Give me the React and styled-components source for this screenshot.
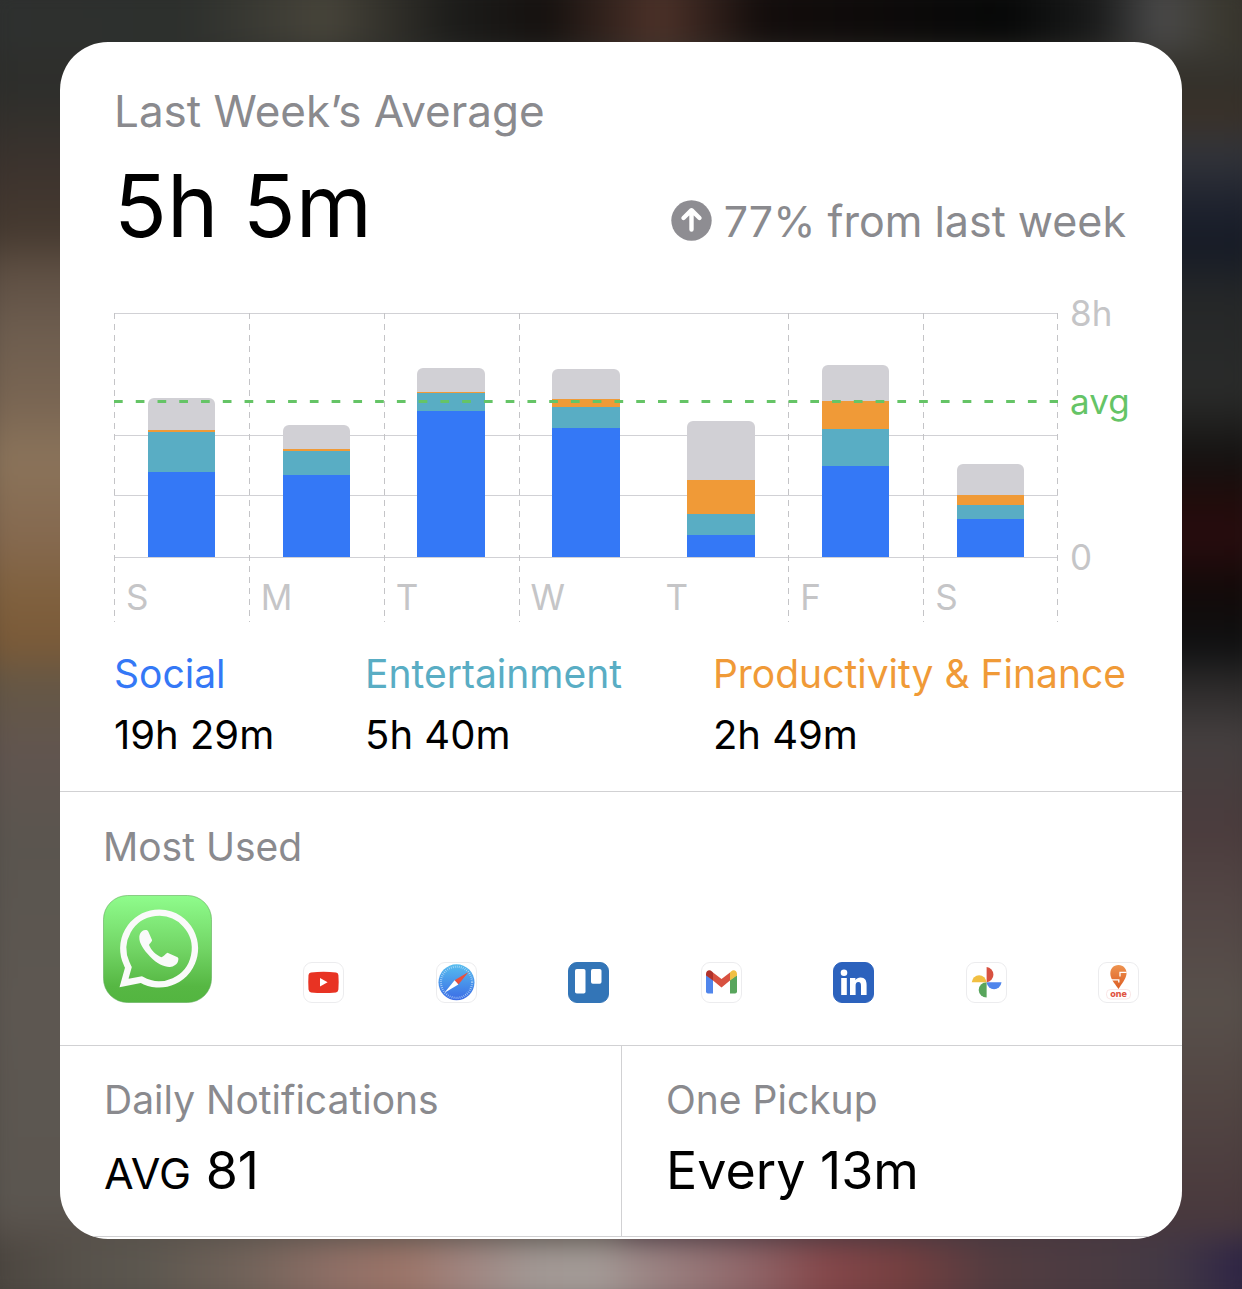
import React from "react";
import styled, { createGlobalStyle } from "styled-components";

const GlobalStyle = createGlobalStyle`
  *, *::before, *::after { box-sizing: border-box; }
  body {
    margin: 0;
    background: #2b2b2b;
    font-family: Inter, "Liberation Sans", sans-serif;
    color: #000;
  }
  h1, h2, p, dl, dt, dd, ul { margin: 0; padding: 0; font-weight: 400; }
`;

const Page = styled.main`
  position: relative;
  overflow: hidden;
  min-height: 100vh;
  padding: 42px 60px 50px;
`;

const Backdrop = styled.div`
  position: absolute;
  inset: -20px;
  filter: blur(14px);
  background:
    linear-gradient(to right, #2e302f 0%, #2d302d 16%, #47443a 27%, #1c1c1a 37%, #15110f 44%, #4d3229 53%, #130d0c 61%, #070808 80%, #1a1b1b 87%, #4a4a4a 92%, #3a382f 97%, #35322b 100%) top / 100% 70px no-repeat,
    linear-gradient(to right, #4a443e 0%, #57524b 8%, #5c574f 13%, #72635a 21%, #8f6f66 28%, #9b7468 33%, #a08580 38%, #a19793 43%, #a39a96 48%, #9b8584 52%, #8f6568 60%, #84474a 66%, #743f40 72%, #533c40 79%, #493b42 88%, #423845 93%, #2a2045 100%) bottom / 100% 68px no-repeat,
    linear-gradient(to bottom, #2f302f 0%, #2d2e2b 8%, #3e342e 15%, #463a30 19%, #5e4f43 22%, #6c5c4e 26%, #7a6653 32%, #8a735a 36%, #85694f 42%, #80613f 46%, #7a5a38 50%, #655745 53%, #61554f 58%, #5a554f 65%, #5d5751 77%, #5b5650 92%, #4c403a 100%) left / 50% 100% no-repeat,
    linear-gradient(to bottom, #43443f 0%, #33302a 8%, #3a3128 10%, #32343a 13%, #1e222e 17%, #161b26 20%, #252728 24%, #2a2b2a 31%, #141211 36%, #200c0b 39%, #280c0e 42%, #120a09 46%, #0f1011 50%, #2b2929 53%, #443f3f 57%, #4b3c3d 64%, #524544 69%, #58504b 77%, #524643 84%, #4a3a3d 92%, #3c3044 100%) right / 50% 100% no-repeat;
`;

const Card = styled.article`
  position: relative;
  overflow: hidden;
  border-radius: 48px;
  background: #fff;
`;

const Section = styled.section`
  padding: ${(p) => p.$pad};
  border-bottom: 1px solid #d1d1d3;
`;

const Title = styled.h1`
  color: #8a8a8e;
  font-size: 44px;
  line-height: 54px;
`;

const Subtitle = styled.h2`
  color: #8a8a8e;
  font-size: 39px;
  line-height: 48px;
`;

const Headline = styled.div`
  display: flex;
  align-items: baseline;
  justify-content: space-between;
  margin-top: 15px;
`;

const Total = styled.p`
  font-size: 87px;
  line-height: 106px;
`;

const Change = styled.p`
  color: #8a8a8e;
  font-size: 43px;
  line-height: 54px;
  svg {
    margin-right: 12px;
    vertical-align: -4px;
  }
`;

const Chart = styled.div`
  display: grid;
  grid-template-columns: 1fr 68px;
  margin-top: 54px;
`;

const Columns = styled.div`
  position: relative;
  display: grid;
  grid-template-columns: repeat(7, 1fr);
  background:
    repeating-linear-gradient(to bottom, #c4c4c7 0 6px, transparent 6px 11px) right / 1px 100% no-repeat,
    linear-gradient(#d1d1d5, #d1d1d5) 0 0 / 100% 1px no-repeat,
    linear-gradient(#d1d1d5, #d1d1d5) 0 122px / 100% 1px no-repeat,
    linear-gradient(#d1d1d5, #d1d1d5) 0 182px / 100% 1px no-repeat,
    linear-gradient(#d1d1d5, #d1d1d5) 0 244px / 100% 1px no-repeat;
`;

const Day = styled.div`
  background: ${(p) =>
    p.$ruled
      ? "repeating-linear-gradient(to bottom, #c4c4c7 0 6px, transparent 6px 11px) left / 1px 100% no-repeat"
      : "none"};
`;

const Stack = styled.div`
  display: flex;
  flex-direction: column;
  justify-content: flex-end;
  width: 50%;
  height: 244px;
  margin: 0 auto;
`;

const Segment = styled.div`
  flex: none;
  background: ${(p) => p.$color};
  &:first-child { border-radius: 6px 6px 0 0; }
`;

const DayName = styled.p`
  padding: 18px 0 3px 12px;
  color: #c5c5c7;
  font-size: 35px;
  line-height: 44px;
`;

const AverageLine = styled.svg`
  position: absolute;
  top: 87px;
  left: 0;
  width: 100%;
  height: 3px;
`;

const Axis = styled.div`
  display: flex;
  flex-direction: column;
  height: 244px;
  padding-left: 12px;
  color: #c5c5c7;
  font-size: 35px;
  line-height: 44px;
`;

const AxisLabel = styled.span`
  margin-top: ${(p) => p.$gap}px;
  color: ${(p) => p.$color || "inherit"};
`;

const Categories = styled.dl`
  display: flex;
  justify-content: space-between;
  margin-top: 28px;
  font-size: 40px;
  line-height: 48px;
`;

const Category = styled.div`
  dt {
    margin-bottom: 13px;
    color: ${(p) => p.$color};
    font-size: 39px;
  }
`;

const Apps = styled.ul`
  display: flex;
  align-items: flex-end;
  justify-content: space-between;
  margin-top: 24px;
  list-style: none;
`;

const AppItem = styled.li`
  display: flex;
`;

const Stats = styled.div`
  display: grid;
  grid-template-columns: 1fr 1fr;
  margin-bottom: 2px;
  border-bottom: 1px solid #d1d1d3;
`;

const Stat = styled.section`
  padding: 30px 44px 31px;
  & + & { border-left: 1px solid #d1d1d3; }
`;

const StatValue = styled.p`
  margin-top: 15px;
  font-size: 52px;
  line-height: 64px;
  small { font-size: 43px; }
`;

const COLORS = {
  other: "#d1d0d5",
  productivity: "#f09a37",
  entertainment: "#59adc4",
  social: "#3478f6",
};

const DAYS = [
  { name: "S", other: 32, productivity: 2, entertainment: 40, social: 85 },
  { name: "M", other: 24, productivity: 2, entertainment: 24, social: 82 },
  { name: "T", other: 24, productivity: 1, entertainment: 18, social: 146 },
  { name: "W", other: 30, productivity: 8, entertainment: 21, social: 129 },
  { name: "T", other: 59, productivity: 34, entertainment: 21, social: 22, open: true },
  { name: "F", other: 36, productivity: 28, entertainment: 37, social: 91 },
  { name: "S", other: 31, productivity: 10, entertainment: 14, social: 38 },
];

const CATEGORIES = [
  { name: "Social", time: "19h 29m", color: COLORS.social },
  { name: "Entertainment", time: "5h 40m", color: COLORS.entertainment },
  { name: "Productivity & Finance", time: "2h 49m", color: COLORS.productivity },
];

const Tile = ({ label, children, fill = "#fff" }) => (
  <svg width="41" height="41" viewBox="0 0 41 41" role="img" aria-label={label}>
    <rect x="0.5" y="0.5" width="40" height="40" rx="8.5" fill={fill} stroke={fill === "#fff" ? "#ececee" : fill} />
    {children}
  </svg>
);

const WhatsApp = () => (
  <svg width="109" height="108" viewBox="0 0 109 108" role="img" aria-label="WhatsApp">
    <defs>
      <linearGradient id="wa" x1="0" y1="0" x2="0" y2="1">
        <stop offset="0" stopColor="#8ffc8c" />
        <stop offset="0.5" stopColor="#72d565" />
        <stop offset="0.85" stopColor="#56b743" />
        <stop offset="1" stopColor="#53b540" />
      </linearGradient>
    </defs>
    <rect x="0.5" y="0.5" width="108" height="107" rx="24" fill="url(#wa)" stroke="#5fae58" strokeOpacity="0.6" />
    <path d="M21 88 L25.4 72.4 Q24.400 70.500 23.600 68.500 A35.8 35.8 0 1 1 38.4 84.6 Z" fill="none" stroke="#fafafa" strokeWidth="6.4" />
    <path d="M36.3 42 C36.5 38 39.5 35 42 34.9 C44 34.8 44.8 35.2 45.5 37 L49 45 C49.4 46.5 46.5 48.5 46 50 C48 55 53 60 58.3 62.2 C60.5 62 62.5 58.5 64.5 57.8 L74 62 C75.5 62.8 75.6 63.5 75.2 65.5 C74.5 69.5 70.5 71.7 67 71.9 C62 72.2 54 69 47 61.5 C41 55 36 48.5 36.3 42 Z" fill="#fafafa" />
  </svg>
);

const YouTube = () => (
  <Tile label="YouTube">
    <path d="M8 10.4 Q20.5 9 33 10.4 Q35.2 10.8 35.4 13 Q36 20.5 35.4 27.5 Q35.2 30 33 30.4 Q20.5 31.6 8 30.4 Q5.8 30 5.5 27.5 Q5 20.5 5.5 13 Q5.8 10.8 8 10.4 Z" fill="#e83323" />
    <path d="M17 16 L24.6 20.3 L17 24.6 Z" fill="#fff" />
  </Tile>
);

const Safari = () => (
  <Tile label="Safari">
    <defs>
      <linearGradient id="sf" x1="0" y1="0" x2="0" y2="1">
        <stop offset="0" stopColor="#56bdee" />
        <stop offset="1" stopColor="#3b6be6" />
      </linearGradient>
    </defs>
    <circle cx="20.5" cy="20.3" r="18" fill="url(#sf)" />
    <circle cx="20.5" cy="20.3" r="15.6" fill="none" stroke="#c4e2fa" strokeOpacity="0.85" strokeWidth="2.2" strokeDasharray="0.7 1.34" />
    <path d="M32.5 10 L22.4 22.5 L18.6 18.3 Z" fill="#ea4f3c" />
    <path d="M8.5 30.8 L18.6 18.3 L22.4 22.5 Z" fill="#fff" />
  </Tile>
);

const Trello = () => (
  <Tile label="Trello" fill="#3375b7">
    <rect x="7" y="7" width="10.5" height="24.5" rx="1.8" fill="#fff" />
    <rect x="23" y="7" width="10.5" height="14.8" rx="1.8" fill="#fff" />
  </Tile>
);

const Gmail = () => (
  <Tile label="Gmail">
    <path d="M5 13 L12 18 V31.5 H7 Q5 31.5 5 29.5 Z" fill="#5086ec" />
    <path d="M36 13 L29 18 V31.5 H34 Q36 31.5 36 29.5 Z" fill="#58a55c" />
    <path d="M12 10.5 L20.5 17 L29 10.5 V18.5 L20.5 25.5 L12 18.5 Z" fill="#d85140" />
    <path d="M5 14 V12 C5 8.5 8.5 7 11 9.5 L12 10.5 V18.5 L5 13.5 Z" fill="#b1322a" />
    <path d="M36 14 V12 C36 8.5 32.5 7 30 9.5 L29 10.5 V18.5 L36 13.5 Z" fill="#f1bf42" />
  </Tile>
);

const LinkedIn = () => (
  <Tile label="LinkedIn" fill="#2c62bd">
    <circle cx="11" cy="10.7" r="3.3" fill="#fff" />
    <rect x="8.2" y="16" width="5.6" height="17" fill="#fff" />
    <path d="M17 16 H22.4 V18.2 C23.5 16.4 25.3 15.5 27.5 15.5 C32 15.5 33.6 18.4 33.6 23 V33 H28 V24 C28 21.5 27.4 20 25.4 20 C23.3 20 22.6 21.6 22.6 24 V33 H17 Z" fill="#fff" />
  </Tile>
);

const Photos = () => (
  <Tile label="Google Photos">
    <path d="M20.6 5 A7.7 7.7 0 0 1 20.6 20.3 Z" fill="#d85140" />
    <path d="M35.5 20.3 A7.5 7.9 0 0 1 20.6 20.3 Z" fill="#5086ec" />
    <path d="M20.6 35.5 A7.9 7.6 0 0 1 20.6 20.3 Z" fill="#58a55c" />
    <path d="M5.7 20.3 A7.5 7.9 0 0 1 20.6 20.3 Z" fill="#f1bf42" />
  </Tile>
);

const SwiggyName = styled.text`
  font-family: Inter, "Liberation Sans", sans-serif;
  font-size: 9px;
  font-weight: 800;
  fill: #df5543;
`;

const Swiggy = () => (
  <Tile label="Swiggy One">
    <defs>
      <linearGradient id="sw" x1="0" y1="0" x2="0" y2="1">
        <stop offset="0" stopColor="#ee9450" />
        <stop offset="1" stopColor="#dc5c23" />
      </linearGradient>
    </defs>
    <path d="M20.5 27 C18 23 13.5 18.5 12.5 13.5 C11.5 7 15.5 3 20.5 3 C25.5 3 29 7 28.5 12 C27.8 17.5 23.5 22 20.5 27 Z" fill="url(#sw)" />
    <path d="M28.6 10.3 H22 V14.5" fill="none" stroke="#fff" strokeWidth="1.3" />
    <path d="M12.8 17.8 H20.8 V20.5" fill="none" stroke="#fff" strokeWidth="1.3" />
    <rect x="8.5" y="27.5" width="24" height="9.5" rx="4" fill="#fff" stroke="#f7dcdc" strokeWidth="0.7" />
    <SwiggyName x="20.5" y="35" textAnchor="middle">one</SwiggyName>
  </Tile>
);

const ArrowUpCircle = () => (
  <svg width="41" height="41" viewBox="0 0 41 41" aria-hidden="true">
    <circle cx="20.5" cy="20.5" r="20.2" fill="#8e8d92" />
    <path d="M20.500 29.500 V10.500 M12.500 18 L20.500 10.200 L28.500 18" fill="none" stroke="#fff" strokeWidth="4.4" strokeLinecap="round" strokeLinejoin="round" />
  </svg>
);

const ICONS = [WhatsApp, YouTube, Safari, Trello, Gmail, LinkedIn, Photos, Swiggy];

export default function App() {
  return (
    <>
      <GlobalStyle />
      <Page>
        <Backdrop />
        <Card>
          <Section $pad="42px 56px 32px 54px">
            <Title>Last Week’s Average</Title>
            <Headline>
              <Total>5h 5m</Total>
              <Change>
                <ArrowUpCircle />
                77% from last week
              </Change>
            </Headline>
            <Chart>
              <Columns>
                {DAYS.map((day, i) => (
                  <Day key={i} $ruled={!day.open}>
                    <Stack>
                      {Object.keys(COLORS).map((kind) => (
                        <Segment key={kind} $color={COLORS[kind]} style={{ height: day[kind] }} />
                      ))}
                    </Stack>
                    <DayName>{day.name}</DayName>
                  </Day>
                ))}
                <AverageLine aria-hidden="true">
                  <line x1="0" x2="100%" y1="1.5" y2="1.5" stroke="#65c466" strokeWidth="3" strokeDasharray="8.7 13.06" />
                </AverageLine>
              </Columns>
              <Axis>
                <AxisLabel $gap={-22}>8h</AxisLabel>
                <AxisLabel $gap={44} $color="#65c466">avg</AxisLabel>
                <AxisLabel $gap={112}>0</AxisLabel>
              </Axis>
            </Chart>
            <Categories>
              {CATEGORIES.map((c) => (
                <Category key={c.name} $color={c.color}>
                  <dt>{c.name}</dt>
                  <dd>{c.time}</dd>
                </Category>
              ))}
            </Categories>
          </Section>
          <Section $pad="31px 43px 42px">
            <Subtitle>Most Used</Subtitle>
            <Apps>
              {ICONS.map((Icon, i) => (
                <AppItem key={i}>
                  <Icon />
                </AppItem>
              ))}
            </Apps>
          </Section>
          <Stats>
            <Stat>
              <Subtitle>Daily Notifications</Subtitle>
              <StatValue>
                <small>AVG</small> 81
              </StatValue>
            </Stat>
            <Stat>
              <Subtitle>One Pickup</Subtitle>
              <StatValue>Every 13m</StatValue>
            </Stat>
          </Stats>
        </Card>
      </Page>
    </>
  );
}
